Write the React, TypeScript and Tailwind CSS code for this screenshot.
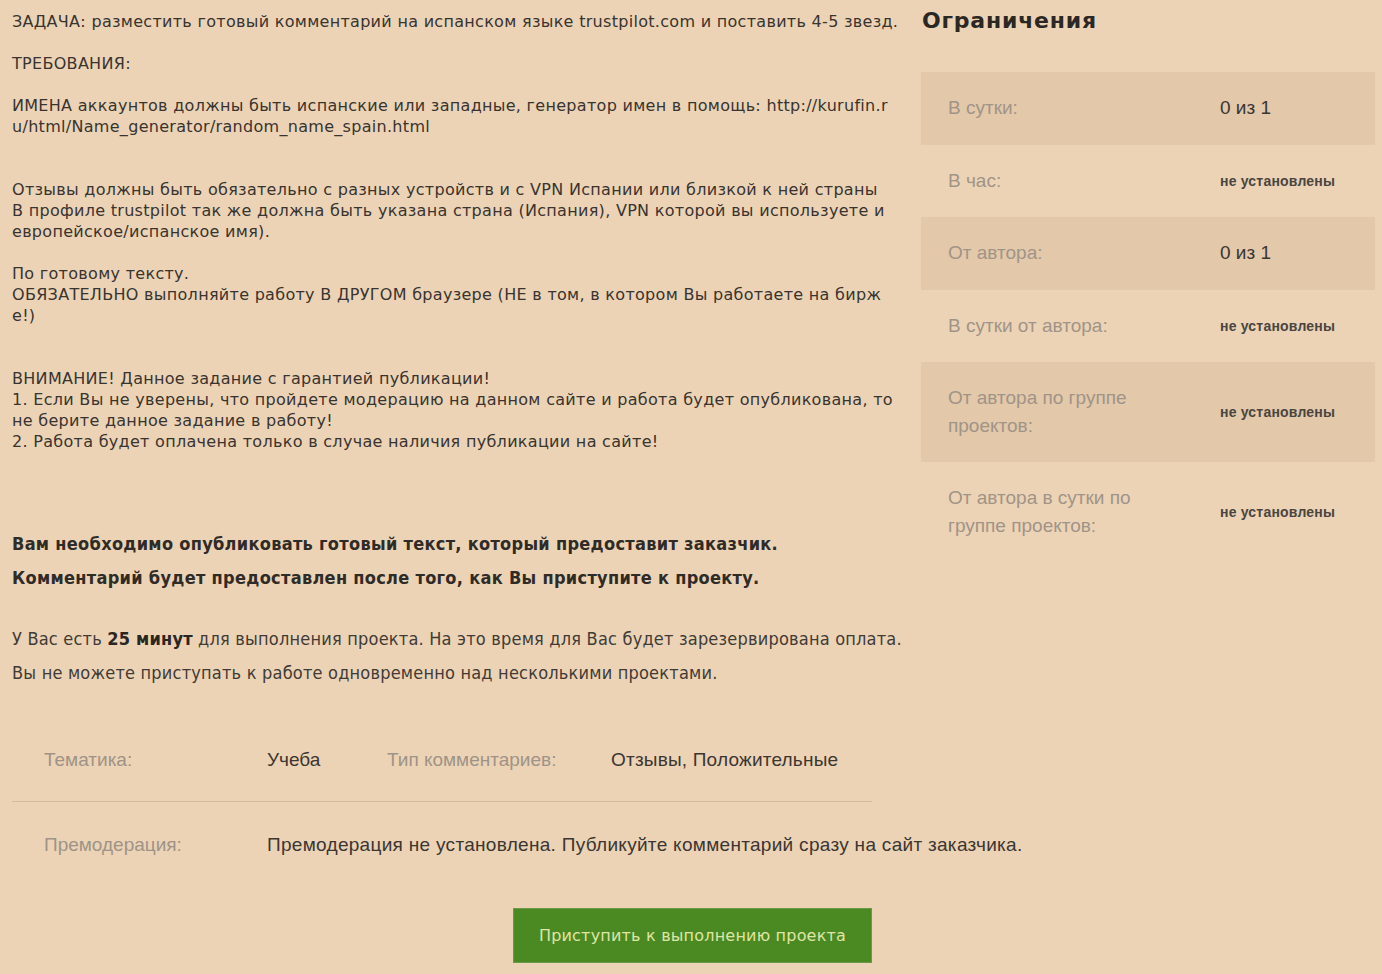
const limits = [
  { label: "В сутки:", value: "0 из 1", big: true },
  { label: "В час:", value: "не установлены", big: false },
  { label: "От автора:", value: "0 из 1", big: true },
  { label: "В сутки от автора:", value: "не установлены", big: false },
  { label: "От автора по группе проектов:", value: "не установлены", big: false },
  { label: "От автора в сутки по группе проектов:", value: "не установлены", big: false },
];

function TaskText() {
  return (
    <div className="whitespace-nowrap font-['DejaVu_Sans',Verdana,sans-serif] text-[16px] leading-[21px] tracking-[0.3px] text-[#383430]">
      <p>ЗАДАЧА: разместить готовый комментарий на испанском языке trustpilot.com и поставить 4-5 звезд.</p>
      <p className="mt-[21px]">ТРЕБОВАНИЯ:</p>
      <p className="mt-[21px]">
        ИМЕНА аккаунтов должны быть испанские или западные, генератор имен в помощь: http://kurufin.r
        <br />
        u/html/Name_generator/random_name_spain.html
      </p>
      <p className="mt-[42px]">
        Отзывы должны быть обязательно с разных устройств и с VPN Испании или близкой к ней страны
        <br />
        В профиле trustpilot так же должна быть указана страна (Испания), VPN которой вы используете и
        <br />
        европейское/испанское имя).
      </p>
      <p className="mt-[21px]">
        По готовому тексту.
        <br />
        ОБЯЗАТЕЛЬНО выполняйте работу В ДРУГОМ браузере (НЕ в том, в котором Вы работаете на бирж
        <br />
        е!)
      </p>
      <p className="mt-[42px]">
        ВНИМАНИЕ! Данное задание с гарантией публикации!
        <br />
        1. Если Вы не уверены, что пройдете модерацию на данном сайте и работа будет опубликована, то
        <br />
        не берите данное задание в работу!
        <br />
        2. Работа будет оплачена только в случае наличия публикации на сайте!
      </p>
    </div>
  );
}

function Notice() {
  return (
    <div className="mt-[75px] whitespace-nowrap font-['DejaVu_Sans_Condensed','DejaVu_Sans',sans-serif] text-[18px] leading-[34px] text-[#2f2b27]">
      <p className="font-bold tracking-[0.3px]">Вам необходимо опубликовать готовый текст, который предоставит заказчик.</p>
      <p className="font-bold tracking-[0.3px]">Комментарий будет предоставлен после того, как Вы приступите к проекту.</p>
      <p className="mt-[27px] tracking-[0.2px] text-[#403b36]">
        У Вас есть <b className="text-[#2a2622]">25 минут</b> для выполнения проекта. На это время для Вас будет зарезервирована оплата.
      </p>
      <p className="tracking-[0.2px] text-[#403b36]">Вы не можете приступать к работе одновременно над несколькими проектами.</p>
    </div>
  );
}

function ProjectMeta() {
  return (
    <div className="mt-[55px] w-[860px] font-['Liberation_Sans',Arial,sans-serif] text-[19px]">
      <div className="flex items-center whitespace-nowrap border-b border-[#d6bb9c] pb-[27px] pt-[1px] leading-[28px]">
        <span className="w-[255px] shrink-0 pl-[32px] text-[#9e9388]">Тематика:</span>
        <span className="w-[120px] shrink-0 text-[#3a3632]">Учеба</span>
        <span className="w-[224px] shrink-0 text-[#9e9388]">Тип комментариев:</span>
        <span className="tracking-[0.2px] text-[#3a3632]">Отзывы, Положительные</span>
      </div>
      <div className="flex items-center whitespace-nowrap pt-[29px] leading-[28px]">
        <span className="w-[255px] shrink-0 pl-[32px] text-[#9e9388]">Премодерация:</span>
        <span className="tracking-[0.3px] text-[#3a3632]">Премодерация не установлена. Публикуйте комментарий сразу на сайт заказчика.</span>
      </div>
      <div className="mt-[49px] flex justify-end">
        <button className="h-[55px] w-[359px] border border-[#6a9a45] bg-[#4b8a22] font-['DejaVu_Sans',Verdana,sans-serif] text-[16px] tracking-[0.2px] text-[#dfe5a6]">
          Приступить к выполнению проекта
        </button>
      </div>
    </div>
  );
}

function Limits() {
  return (
    <aside className="w-[454px]">
      <h2 className="pt-[7px] pl-px font-['DejaVu_Sans',sans-serif] text-[22px] font-bold leading-[28px] tracking-[0.8px] text-[#2b2724]">
        Ограничения
      </h2>
      <div className="mt-[37px]">
        {limits.map((row, i) => (
          <div
            key={row.label}
            className={`flex min-h-[72.5px] items-center py-[22px] font-['Liberation_Sans',Arial,sans-serif] ${i % 2 === 0 ? "bg-[#e3c8aa]" : ""}`}
          >
            <div className="w-[299px] shrink-0 pl-[27px]">
              <div className="w-[200px] text-[19px] leading-[28px] text-[#a09488]">{row.label}</div>
            </div>
            {row.big ? (
              <div className="text-[19px] leading-[28px] text-[#3a3632]">{row.value}</div>
            ) : (
              <div className="text-[14px] font-bold leading-[28px] tracking-[0.2px] text-[#4a4540]">{row.value}</div>
            )}
          </div>
        ))}
      </div>
    </aside>
  );
}

export default function App() {
  return (
    <div className="flex h-[974px] overflow-hidden bg-[#edd3b5]">
      <main className="ml-[12px] w-[909px] shrink-0 pt-[11px]">
        <TaskText />
        <Notice />
        <ProjectMeta />
      </main>
      <Limits />
    </div>
  );
}
